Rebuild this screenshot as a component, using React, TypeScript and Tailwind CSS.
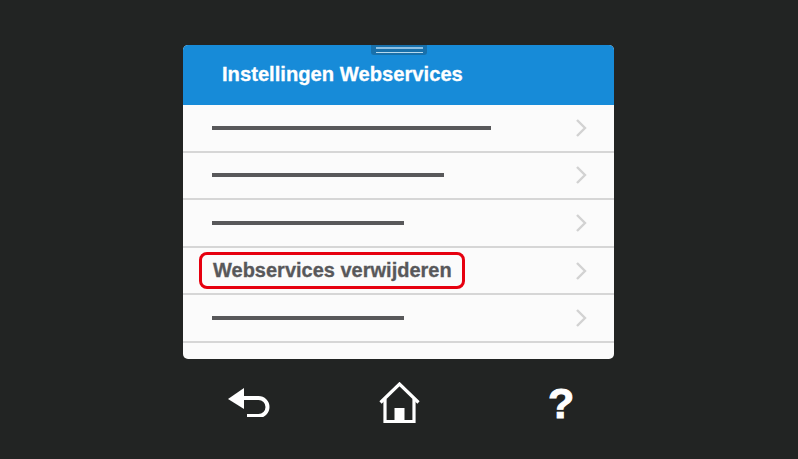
const FONT = "font-['Liberation_Sans',Arial,sans-serif]";

// width of the placeholder bar per row, null = labelled row
const ROWS: { bar?: string; label?: string }[] = [
  { bar: 'w-[279px]' },
  { bar: 'w-[232px]' },
  { bar: 'w-[192px]' },
  { label: 'Webservices verwijderen' },
  { bar: 'w-[192px]' },
];

function Chevron() {
  return (
    <svg width="12" height="20" viewBox="0 0 12 20" fill="none" className="shrink-0">
      <path d="M2 2l8 8-8 8" stroke="#d2d2d2" strokeWidth="2.4" />
    </svg>
  );
}

function Row({ bar, label }: { bar?: string; label?: string }) {
  return (
    <div className="h-[47.6px] shrink-0 flex items-center justify-between pl-[29px] pr-[27px] border-b-[2.5px] border-[#d6d6d6]">
      {label ? (
        <div className="-ml-[13px] h-[37px] w-[266px] flex items-center pl-[11px] pb-[1px] border-[3px] border-[#e6000f] rounded-[8px]">
          <span className={`${FONT} text-[20px] font-bold text-[#58585a] whitespace-nowrap [-webkit-text-stroke:0.3px_#58585a]`}>{label}</span>
        </div>
      ) : (
        <div className={`h-1 bg-[#58585a] ${bar}`} />
      )}
      <Chevron />
    </div>
  );
}

export default function App() {
  return (
    <div className="w-[798px] h-[459px] bg-[#222423] pt-[45px] pl-[183px] overflow-hidden">
      <div className="relative w-[431px] h-[314px] bg-[#fbfbfb] rounded-[5px] overflow-hidden">
        <div className="h-[60px] bg-[#178bd8] flex items-center pl-[39px] pb-[2px]">
          <span className={`${FONT} text-[20.2px] font-bold text-white whitespace-nowrap [-webkit-text-stroke:0.3px_#fff]`}>Instellingen Webservices</span>
        </div>
        {/* drag handle */}
        <div className="absolute top-0 left-[188px] w-[56px] h-[10px] bg-[#1870ab] rounded-b-[3px] flex flex-col items-center pt-[2px] gap-[3px]">
          <div className="w-[47px] h-[2px] bg-[#8fc0e2]" />
          <div className="w-[47px] h-[1px] bg-[#b5d9ef]" />
        </div>
        {ROWS.map((r, i) => (
          <Row key={i} {...r} />
        ))}
      </div>

      {/* bottom buttons */}
      <div className="w-[431px] h-[44px] mt-[22px] relative flex items-center">
        <svg width="44" height="30" viewBox="0 0 44 30" className="ml-[44px] shrink-0 -mt-[3px]">
          <path d="M1 12L17 1v21z" fill="#fff" />
          <path d="M16 11h15.5a8.5 8.5 0 0 1 0 18H20" fill="none" stroke="#fff" strokeWidth="4" />
        </svg>
        <svg width="42" height="42" viewBox="0 0 42 42" className="ml-[108px] shrink-0 -mt-[1px]">
          <path d="M1.5 20.5L20.5 2l19 18.5" fill="none" stroke="#fff" strokeWidth="3.2" />
          <path d="M6 17v22.5h29V17" fill="none" stroke="#fff" strokeWidth="3.2" />
          <path d="M15.5 26h10v13h-10z" fill="#fff" />
        </svg>
        <span className={`${FONT} ml-[127px] text-[43px] leading-none font-bold text-white [-webkit-text-stroke:1px_#fff]`}>?</span>
      </div>
    </div>
  );
}
